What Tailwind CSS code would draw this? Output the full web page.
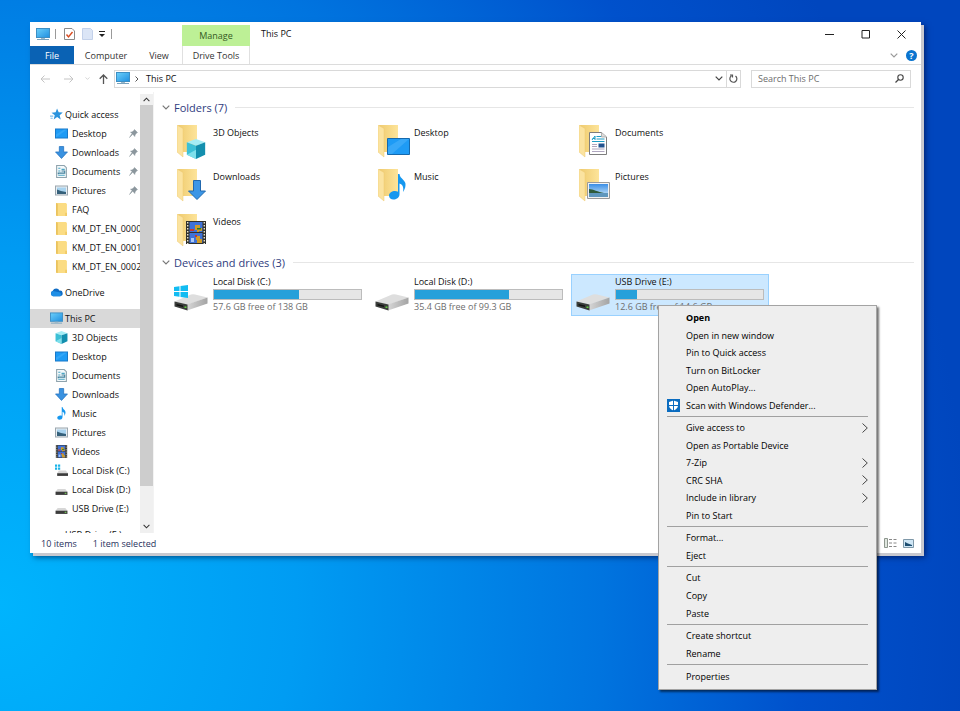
<!DOCTYPE html>
<html lang="en">
<head>
  <meta charset="UTF-8" />
  <meta name="viewport" content="width=device-width, initial-scale=1.0" />
  <title>This PC</title>
  <script src="https://cdn.jsdelivr.net/npm/@tailwindcss/browser@4"></script>
</head>
<body class="min-h-screen bg-[radial-gradient(110%_170%_at_0%_85%,#00b4fd_0%,#009cf3_28%,#0074df_57%,#0051cc_76%,#0046be_92%)] font-['Open_Sans','Noto_Sans',sans-serif] text-[9px] text-[#111] leading-none pt-[22px] pl-[30px] pr-[39px]">

  <!-- icon sprites -->
  <svg class="absolute w-0 h-0" aria-hidden="true">
    <defs>
      <linearGradient id="gFolder" x1="0" x2="1"><stop offset="0" stop-color="#efcb6f" /><stop offset="1" stop-color="#fde49a" /></linearGradient>
      <linearGradient id="gScreen" x1="0" y1="0" x2="1" y2="1"><stop offset="0" stop-color="#6cd0fa" /><stop offset="1" stop-color="#1f8fe0" /></linearGradient>
      <linearGradient id="gDisk" x1="0" x2="1"><stop offset="0" stop-color="#d6d6d6" /><stop offset="1" stop-color="#a4a4a4" /></linearGradient>
      <linearGradient id="gSky" x1="0" y1="0" x2="0" y2="1"><stop offset="0" stop-color="#3a8ee6" /><stop offset="1" stop-color="#d9effa" /></linearGradient>
    </defs>
    <symbol id="pc" viewBox="0 0 14 13">
      <rect x="0.5" y="0.5" width="13" height="9" fill="url(#gScreen)" stroke="#3d8fc4" />
      <path d="M5 10h4v1H5z" fill="#9db8c9" /><path d="M1 11.5h12" stroke="#7ba3bd" />
    </symbol>
    <symbol id="star" viewBox="0 0 12 12">
      <path d="M6.5.5 8 4l3.8.2-2.9 2.5 1 3.8L6.6 8.4 3.4 10.6l1-3.8L1.4 4.4 5.2 4z" fill="#2a93dd" /><path d="M0 7.5h3M.5 9.5h2" stroke="#7cbdec" />
    </symbol>
    <symbol id="desktop" viewBox="0 0 13 12">
      <rect x="0.5" y="1.5" width="12" height="9" fill="#1e9bf5" stroke="#1779c9" /><path d="M1 10V7l8-5h3z" fill="#45b1fb" opacity=".5" />
    </symbol>
    <symbol id="downloads" viewBox="0 0 12 12">
      <path d="M4 .5h4v5h3.500L6 11.500.5 5.500H4z" fill="#3a92e0" stroke="#2272bf" stroke-width=".7" />
    </symbol>
    <symbol id="documents" viewBox="0 0 12 12">
      <path d="M1.500.5h7l2 2v9h-9z" fill="#f4f9fb" stroke="#8fa3ad" /><path d="M3 3h2M6 4h3M3 5.500h2M3 9.500h6" stroke="#4aa5c4" /><path d="M6 5.500h3v2H3v1" stroke="#3f7f9b" fill="none" />
    </symbol>
    <symbol id="pictures" viewBox="0 0 13 12">
      <rect x="0.5" y="1.500" width="12" height="9" fill="#e9eef2" stroke="#9aa6ae" /><path d="M2 3h9v6H2z" fill="#a8d3ef" /><path d="M2 5l4 1.500 5 1v2H2z" fill="#35607a" />
    </symbol>
    <symbol id="folder" viewBox="0 0 12 12">
      <path d="M1 0h9l1 1v11H1z" fill="#fbdc83" /><path d="M1 0l1.500.8V12L1 11.500z" fill="#e8bf59" /><path d="M9.500 9H11v3H9.500z" fill="#f0c964" />
    </symbol>
    <symbol id="onedrive" viewBox="0 0 14 10">
      <path d="M3.500 9A3 3 0 0 1 3 3.200 4 4 0 0 1 10.300 3 3 3 0 0 1 11 9z" fill="#0f6cc4" /><path d="M3 9a3 3 0 0 1 0-5.500l7 1.200A2.500 2.500 0 0 1 11 9z" fill="#1f8fe6" />
    </symbol>
    <symbol id="cube" viewBox="0 0 24 24">
      <path d="M12 0 23 4 12 8 1 4z" fill="#a5edf5" /><path d="M1 4l11 4v16L1 19z" fill="#3cc0d6" /><path d="M23 4 12 8v16l11-5z" fill="#138fae" /><path d="M1 19 12 13v11z" fill="#8fe6f0" opacity=".8" />
    </symbol>
    <symbol id="music" viewBox="0 0 17 26">
      <path d="M9 0h1.500c.5 5 6.500 6 6 11 0 3-1.500 5.500-2.500 7 1-5-.5-7.500-3.500-8.500V20c0 4-3.500 5.500-6 5.500S0 24 0 21.500 3 17 6 17c1.200 0 2 .2 3 .7z" fill="#1597ef" />
    </symbol>
    <symbol id="film" viewBox="0 0 20 23">
      <path d="M0 0h20v23H0z" fill="#30302c" /><path d="M3.500 1h13v10h-13zM3.500 12h13v10h-13z" fill="#3f72d6" />
      <path d="M1.700 1v22M18.300 1v22" stroke="#e9e5d2" stroke-width="1.400" stroke-dasharray="1.500 1.500" />
      <path d="M9 4h5v3h2v3h-3v1h-2V9H9zM10 15h4v3h2v4h-5v-3h-1z" fill="#d19c27" /><path d="M4 8h4v2H4zM9 14h2v2H9z" fill="#c43b2e" /><path d="M11 7h4v1.500h-4z" fill="#1d7a32" /><path d="M5 17h3v4H5z" fill="#a9c7f5" />
    </symbol>
    <symbol id="disk" viewBox="0 0 34 18">
      <path d="M.5 8.500 17 1.500Q19 .8 21 1.500L33.500 4.500 13.500 11.800z" fill="#dedede" /><path d="M13 11.500 33.500 4.500v6L13 17.500z" fill="url(#gDisk)" /><path d="M.5 8.500 13.500 11.500v6L.5 13.500z" fill="#3a3d3a" /><path d="M2.500 11 9 12.500v1.500L2.500 12.500z" fill="#111" /><path d="M10.500 13.500h2v1.500h-2z" fill="#63d23f" />
    </symbol>
    <symbol id="drive" viewBox="0 0 12 12">
      <path d="M2.500 5.500h7L11.500 8H.5z" fill="#d7d7d7" /><path d="M.5 8h11v3H.5z" fill="#3c3c3c" /><path d="M9 9h1.500v1H9z" fill="#7ad858" />
    </symbol>
    <symbol id="driveWin" viewBox="0 0 12 12">
      <path d="M0 .5h2v2H0zM2.800.5h2v2h-2zM0 3.300h2v2H0zM2.800 3.300h2v2h-2z" fill="#19b3e8" /><path d="M3.500 6h6.500L12 8.500H2z" fill="#d7d7d7" /><path d="M2 8.500h10V11H2z" fill="#3c3c3c" />
    </symbol>
    <symbol id="pin" viewBox="0 0 9 9">
      <path d="M5.500.5 8.500 3.500 7.500 4 6 6v1.500L3.700 5.300.5 8.500l2.500-4L1.500 3H3l2-1.500z" fill="#8b969d" stroke="#8b969d" stroke-width=".5" />
    </symbol>
    <symbol id="chevDown" viewBox="0 0 8 5"><path d="M.7.7 4 4 7.300.7" fill="none" stroke="currentColor" stroke-width="1.200" /></symbol>
    <!-- large folder, 32px -->
    <symbol id="bigFolder" viewBox="0 0 32 34">
      <path d="M1 0h19v27H6z" fill="url(#gFolder)" /><path d="M0 0l6 3.500V32L0 27z" fill="#fbe3a0" stroke="#ecc873" stroke-width=".5" />
    </symbol>
  </svg>

  <main class="bg-white h-[531px] flex flex-col shadow-[3px_3px_0_#c9c9cf,4px_4px_6px_rgba(0,0,40,.6)]">
    <header>
      <!-- title bar -->
      <div class="flex h-6">
        <div class="w-[152px] flex items-center pl-1.5">
          <svg class="w-3.5 h-[13px]"><use href="#pc" /></svg>
          <i class="w-px h-2.5 bg-[#9a9a9a] ml-[5px]"></i>
          <button aria-label="Properties" class="ml-2"><svg class="w-[11px] h-3" viewBox="0 0 11 12"><path d="M.5.5h7.500l2.500 2.500v8.500H.5z" fill="#fff" stroke="#8a8a8a" /><path d="M2.500 6.500 4.500 9 8.500 4" stroke="#d84b20" stroke-width="1.400" fill="none" /></svg></button>
          <button aria-label="New folder" class="ml-[7px]"><svg class="w-[11px] h-3" viewBox="0 0 11 12"><path d="M.5.5h8l2 2v9H.5z" fill="#dbe5f6" stroke="#c3d1ea" /></svg></button>
          <button aria-label="Customize toolbar" class="ml-[5px]"><svg class="w-2 h-2" viewBox="0 0 8 8"><path d="M1 1.500h6" stroke="#222" /><path d="M1 4h6L4 7z" fill="#222" /></svg></button>
          <i class="w-px h-2.5 bg-[#9a9a9a] ml-[5px]"></i>
        </div>
        <div class="w-[68px] bg-[#bdf096] mt-[3px] flex items-center justify-center text-[#35591f]">Manage</div>
        <h1 class="flex-1 pl-[11px] leading-6">This PC</h1>
        <div class="flex items-center gap-[27px] pr-[15px]">
          <button aria-label="Minimize"><svg class="w-[9px] h-[9px]" viewBox="0 0 9 9"><path d="M0 4.500h9" stroke="#222" /></svg></button>
          <button aria-label="Maximize"><svg class="w-[9px] h-[9px]" viewBox="0 0 9 9"><path d="M1 .5h7.500V8H1z" stroke="#222" fill="none" /></svg></button>
          <button aria-label="Close"><svg class="w-[9px] h-[9px]" viewBox="0 0 9 9"><path d="M.5.5l8 8M8.500.5l-8 8" stroke="#222" /></svg></button>
        </div>
      </div>
      <!-- ribbon tabs -->
      <nav class="flex h-[19px] border-b border-[#dcdcdc] text-[#333]">
        <div class="w-[152px] flex">
          <button class="w-11 bg-[#0a62b4] text-white font-medium">File</button>
          <button class="w-16">Computer</button>
          <button class="w-[42px]">View</button>
        </div>
        <button class="w-[68px] border-x border-[#e0e0e0]">Drive Tools</button>
        <div class="flex-1 flex items-center justify-end gap-2 pr-1">
          <button aria-label="Expand ribbon" class="text-[#999]"><svg class="w-2 h-[5px]"><use href="#chevDown" /></svg></button>
          <button aria-label="Help" class="w-[11px] h-[11px] rounded-full bg-[#0a74cf] text-white font-bold leading-[11px]">?</button>
        </div>
      </nav>
      <!-- address bar -->
      <div class="flex items-center h-[27px] px-2.5">
        <div class="flex items-center w-[74px] text-[#c4c4c4]">
          <button aria-label="Back"><svg class="w-2.5 h-2" viewBox="0 0 10 8"><path d="M10 4H1M4.500.5 1 4l3.500 3.500" fill="none" stroke="currentColor" /></svg></button>
          <button aria-label="Forward" class="ml-[14px]"><svg class="w-2.5 h-2" viewBox="0 0 10 8"><path d="M0 4h9M5.500.5 9 4 5.500 7.500" fill="none" stroke="currentColor" /></svg></button>
          <button aria-label="Recent" class="ml-[11px]"><svg class="w-[5px] h-[3px]"><use href="#chevDown" /></svg></button>
          <button aria-label="Up" class="ml-[9px] text-[#555]"><svg class="w-[9px] h-2.5" viewBox="0 0 9 10"><path d="M4.500 10V1M.7 4.700 4.500 1l3.800 3.700" fill="none" stroke="currentColor" stroke-width="1.300" /></svg></button>
        </div>
        <div class="flex-1 flex items-center h-[18px] border border-[#d9d9d9] pl-px">
          <svg class="w-3.5 h-[13px]"><use href="#pc" /></svg>
          <svg class="w-1 h-1.5 ml-[5px]" viewBox="0 0 4 6"><path d="M.5.5 3 3 .5 5.500" fill="none" stroke="#555" /></svg>
          <span class="ml-[7px] flex-1">This PC</span>
          <button aria-label="Previous locations" class="mr-[3px] text-[#444]"><svg class="w-2 h-[5px]"><use href="#chevDown" /></svg></button>
          <button aria-label="Refresh" class="w-[14px] h-full border-l border-[#d9d9d9] flex items-center justify-center"><svg class="w-[9px] h-[9px]" viewBox="0 0 9 9"><path d="M6.500 2A3.500 3.500 0 1 1 2.500 1.800M1 1h2.500v2.500" fill="none" stroke="#555" stroke-width="1.200" /></svg></button>
        </div>
        <label class="ml-2.5 w-40 h-[18px] border border-[#d9d9d9] flex items-center px-1.5">
          <input type="text" placeholder="Search This PC" aria-label="Search This PC" class="flex-1 min-w-0 outline-none placeholder:text-[#6d6d6d]" />
          <svg class="w-[9px] h-[9px]" viewBox="0 0 9 9"><circle cx="5.500" cy="3.500" r="2.700" fill="none" stroke="#444" stroke-width="1.100" /><path d="M3.500 5.500.5 8.500" stroke="#444" stroke-width="1.200" /></svg>
        </label>
      </div>
    </header>

    <div class="flex flex-1 min-h-0">
      <aside class="w-[110px] overflow-hidden pt-[13px]">
        <ul id="tree"></ul>
      </aside>
      <!-- scrollbar -->
      <div class="w-[13px] mt-0.5 bg-[#f0f0f0] flex flex-col items-center text-[#333]">
        <svg class="w-[7px] h-[5px] my-[3px] rotate-180"><use href="#chevDown" /></svg>
        <div class="w-full h-[381px] bg-[#cdcdcd]"></div>
        <svg class="w-[7px] h-[5px] mt-auto mb-1"><use href="#chevDown" /></svg>
      </div>

      <section class="flex-1 pl-2 pr-[7px] pt-2 border-l border-[#f3f3f3]">
        <h2 class="flex items-center gap-1 h-[14px] text-[11px] text-[#2f3c7e]">
          <svg class="w-2 h-[5px] text-[#777]"><use href="#chevDown" /></svg>Folders (7)
          <i class="flex-1 h-px bg-[#e6e6e6] ml-1"></i>
        </h2>
        <div id="folders" class="grid grid-cols-[201px_201px_201px] grid-rows-[44px_45px_41px] mt-[11px] pl-[15px]"></div>
        <h2 class="flex items-center gap-1 h-[14px] text-[11px] text-[#2f3c7e]">
          <svg class="w-2 h-[5px] text-[#777]"><use href="#chevDown" /></svg>Devices and drives (3)
          <i class="flex-1 h-px bg-[#e6e6e6] ml-1"></i>
        </h2>
        <div id="drives" class="grid grid-cols-[198px_198px_198px] gap-x-[3px] mt-[5px] pl-[7px]"></div>
      </section>
    </div>

    <footer class="h-5 flex items-center pl-[11px] pr-[7px] text-[#27315c]">
      <span>10 items</span>
      <span class="ml-4 flex-1">1 item selected</span>
      <button aria-label="Details view"><svg class="w-[13px] h-[10px]" viewBox="0 0 13 10"><path d="M.5.5h3v9h-3z" fill="#dfe6df" stroke="#8d968d" /><path d="M5 1.500h3M5 5h3M5 8.500h3M9.500 1.500h3M9.500 5h3M9.500 8.500h3" stroke="#888" /></svg></button>
      <button aria-label="Icons view" class="ml-1.5"><svg class="w-[11px] h-[9px]" viewBox="0 0 11 9"><path d="M.5.5h10v8H.5z" fill="#cfe6f5" stroke="#7f98a8" /><path d="M2 3l3 1.500 4 1.500v1H2z" fill="#1c4d70" /></svg></button>
    </footer>
  </main>

  <!-- context menu -->
  <div id="menu" role="menu" class="absolute left-[658px] top-[305px] w-[219px] bg-[#eeeeee] border border-[#a3a3a3] pt-[3px] pb-1 px-2 text-black shadow-[2px_2px_2px_rgba(0,0,0,.55)]"></div>

  <script>
    const icon = (id, cls) => `<svg class="${cls}"><use href="#${id}" /></svg>`;

    const tree = [
      ["star", "Quick access", 0], ["desktop", "Desktop", 1, true], ["downloads", "Downloads", 1, true],
      ["documents", "Documents", 1, true], ["pictures", "Pictures", 1, true], ["folder", "FAQ", 1],
      ["folder", "KM_DT_EN_0000", 1], ["folder", "KM_DT_EN_0001", 1], ["folder", "KM_DT_EN_0002", 1],
      null, ["onedrive", "OneDrive", 0], null, ["pc", "This PC", 0],
      ["cube", "3D Objects", 1], ["desktop", "Desktop", 1], ["documents", "Documents", 1],
      ["downloads", "Downloads", 1], ["music", "Music", 1], ["pictures", "Pictures", 1], ["film", "Videos", 1],
      ["driveWin", "Local Disk (C:)", 1], ["drive", "Local Disk (D:)", 1], ["drive", "USB Drive (E:)", 1],
      null, ["drive", "USB Drive (E:)", 0]
    ];
    document.getElementById("tree").innerHTML = tree.map(t => {
      if (!t) return `<li class="h-[7px]"></li>`;
      const [ic, name, level, pinned] = t;
      const pad = level ? "pl-[25px] gap-1" : "pl-5 gap-0.5";
      const bg = name === "This PC" ? "bg-[#d9d9d9]" : "";
      return `<li class="flex items-center h-[19px] whitespace-nowrap ${pad} ${bg}">
        ${icon(ic, "w-[13px] h-[13px] shrink-0")}<a href="#" class="flex-1">${name}</a>
        ${pinned ? icon("pin", "w-[9px] h-[9px] mr-0.5") : ""}</li>`;
    }).join("");

    // small picture laid over the big folder
    const overlays = {
      "3D Objects": icon("cube", "absolute left-[9px] top-[14px] w-5 h-5"),
      "Desktop": `<svg class="absolute left-[9px] top-[13px] w-[23px] h-[17px]" viewBox="0 0 23 17"><path d="M.5.5h22v16H.5z" fill="#1e9bf5" stroke="#1569ad" /><path d="M1 16V9L14 1h8L5 16z" fill="#51b5fb" opacity=".5" /></svg>`,
      "Documents": `<svg class="absolute left-[10px] top-[7px] w-[18px] h-[23px]" viewBox="0 0 18 23"><path d="M.5.5h12l5 4.500v17.500H.5z" fill="#fff" stroke="#7d7d7d" /><path d="M12.500.5V5h5" fill="#ddd" stroke="#999" stroke-width=".7" /><path d="M3 8l3-4v4M3.500 6.500H6M7.500 4.500H12M7.500 7h8M3 9.500h12.500" stroke="#1c9cc4" fill="none" /><path d="M3 12.500h5M3 14.500h5M3 17h12.500M3 19.500h12.500" stroke="#9a8fae" stroke-width=".8" /><path d="M9.500 11.500h6v4h-6z" fill="#23538f" /></svg>`,
      "Downloads": `<svg class="absolute left-[11px] top-[11px] w-[18px] h-[20px]" viewBox="0 0 18 20"><path d="M5.500.5h7V11h5L9 19.500.5 11h5z" fill="#3c96e6" stroke="#2168ae" /></svg>`,
      "Music": icon("music", "absolute left-[11px] top-[5px] w-[17px] h-[26px]"),
      "Pictures": `<svg class="absolute left-[8px] top-[13px] w-[23px] h-[17px]" viewBox="0 0 23 17"><path d="M.5.5h22v16H.5z" fill="#f2f2f2" stroke="#9a9a9a" /><path d="M2 2h19v13H2z" fill="url(#gSky)" /><path d="M2 7c4 0 9 3 15 4H2z" fill="#2f5b3b" /><path d="M2 11h19v4H2z" fill="#5f97bd" /></svg>`,
      "Videos": icon("film", "absolute left-[9px] top-[7px] w-5 h-[23px]")
    };
    const folderNames = ["3D Objects", "Desktop", "Documents", "Downloads", "Music", "Pictures", "Videos"];
    document.getElementById("folders").innerHTML = folderNames.map(n => `
      <a href="#" class="flex"><span class="relative w-8 h-[34px]">${icon("bigFolder", "w-8 h-[34px]")}${overlays[n]}</span>
      <span class="ml-1 leading-4">${n}</span></a>`).join("");

    const winFlag = `<svg class="absolute left-0 top-0 w-[14px] h-[13px]" viewBox="0 0 14 13"><path d="M0 2l5.500-.8V6H0zM6.500 1 14 0v6H6.500zM0 7h5.500v4.800L0 11zM6.500 7H14v6l-7.500-1z" fill="#12bcf2" /></svg>`;
    const drives = [
      ["Local Disk (C:)", 58, "57.6 GB free of 138 GB", winFlag, "border-transparent"],
      ["Local Disk (D:)", 64, "35.4 GB free of 99.3 GB", "", "border-transparent"],
      ["USB Drive (E:)", 14, "12.6 GB free of 14.6 GB", "", "bg-[#cce8ff] border-[#99d1ff]"]
    ];
    document.getElementById("drives").innerHTML = drives.map(([n, used, free, flag, sel]) => `
      <a href="#" class="flex h-[42px] border ${sel} pl-1 pr-1">
        <span class="relative w-[34px] h-[26px] mt-[10px] flex items-end">${icon("disk", "w-[34px] h-[18px]")}${flag}</span>
        <span class="ml-[5px] flex-1"><span class="block leading-[14px]">${n}</span>
          <span class="block h-[11px] bg-[#e6e6e6] border border-[#bcbcbc]"><span class="block h-full bg-[#26a0da]" style="width:${used}%"></span></span>
          <span class="block leading-[13px] text-[#6d6d6d]">${free}</span></span>
      </a>`).join("");

    const shield = `<svg class="w-[13px] h-[13px]" viewBox="0 0 13 13"><path d="M0 0h13v13H0z" fill="#0a6cc0" /><path d="M6.500 1.500 11 3v3.500c0 2.500-2 4-4.500 5-2.500-1-4.500-2.500-4.500-5V3z" fill="#fff" /><path d="M6.500 1v11M1.500 6.500h10" stroke="#0a6cc0" /></svg>`;
    const arrow = `<svg class="w-1.5 h-2.5" viewBox="0 0 6 10"><path d="M.5.5 5.300 5 .5 9.500" fill="none" stroke="#444" /></svg>`;
    const groups = [
      ["h-[105px]", ["Open", "Open in new window", "Pin to Quick access", "Turn on BitLocker", "Open AutoPlay...", "Scan with Windows Defender..."]],
      ["h-[105px]", ["Give access to", "Open as Portable Device", "7-Zip", "CRC SHA", "Include in library", "Pin to Start"]],
      ["h-[35px]", ["Format...", "Eject"]],
      ["h-[53px]", ["Cut", "Copy", "Paste"]],
      ["h-[35px]", ["Create shortcut", "Rename"]],
      ["h-[18px]", ["Properties"]]
    ];
    const submenus = ["Give access to", "7-Zip", "CRC SHA", "Include in library"];
    document.getElementById("menu").innerHTML = groups.map(([h, items]) => `
      <div class="grid auto-rows-fr ${h}">${items.map(n => `
        <button role="menuitem" class="flex items-center text-left ${n === "Open" ? "font-bold" : ""}">
          <span class="w-[19px]">${n.startsWith("Scan") ? shield : ""}</span>
          <span class="flex-1">${n}</span>${submenus.includes(n) ? arrow : ""}
        </button>`).join("")}</div>`).join(`<hr class="my-0.5 border-[#a0a0a0]" />`);
  </script>
</body>
</html>
